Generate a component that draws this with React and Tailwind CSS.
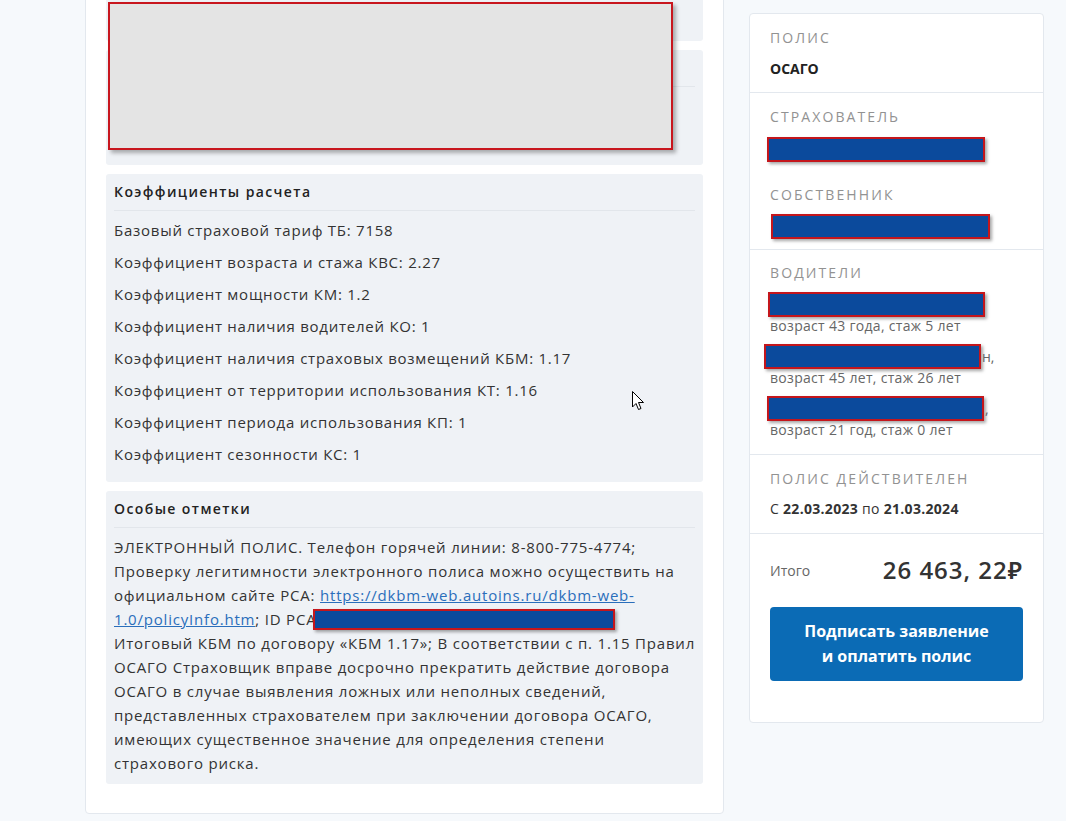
import React from 'react'

const font = { fontFamily: '"Open Sans", "Noto Sans", Arial, sans-serif' }

function Redact({ w, className = '' }) {
    return (
        <div
            className={`h-[25px] bg-[#0b4a9c] border-2 border-[#c4161c] shadow-[2px_2px_3px_rgba(0,0,0,0.35)] ${className}`}
            style={{ width: w }}
        />
    )
}

function Label({ children }) {
    return <div className="text-[14px] leading-5 tracking-[2.1px] uppercase text-[#929292]">{children}</div>
}

const coefs = [
    'Базовый страховой тариф ТБ: 7158',
    'Коэффициент возраста и стажа КВС: 2.27',
    'Коэффициент мощности КМ: 1.2',
    'Коэффициент наличия водителей КО: 1',
    'Коэффициент наличия страховых возмещений КБМ: 1.17',
    'Коэффициент от территории использования КТ: 1.16',
    'Коэффициент периода использования КП: 1',
    'Коэффициент сезонности КС: 1',
]

const drivers = [
    { w: 217, shift: 'ml-[-2px]', age: 'возраст 43 года, стаж 5 лет', tail: '' },
    { w: 217, shift: 'ml-[-6px]', age: 'возраст 45 лет, стаж 26 лет', tail: 'н,' },
    { w: 217, shift: 'ml-[-3px]', age: 'возраст 21 год, стаж 0 лет', tail: ',' },
]

export default function App() {
    return (
        <div className="relative min-h-[821px] h-[821px] overflow-hidden bg-[#f6f9fc] text-[#333]" style={font}>
            <div className="flex items-start gap-[25px] pl-[85px]">
                {/* left card */}
                <div className="relative w-[639px] mt-[-30px] bg-white border border-[#e3e8ee] rounded-[4px] px-5 pt-5 pb-[29px] flex flex-col gap-[9px]">
                    <div className="h-[50px] bg-[#eff2f6] rounded-[3px]" />
                    <div className="h-[115px] bg-[#eff2f6] rounded-[3px] px-2 pt-9">
                        <div className="border-t border-[#e2e6eb]" />
                    </div>

                    <div className="bg-[#eff2f6] rounded-[3px] pb-3">
                        <div className="px-2 pt-2 pb-2 text-[14px] leading-5 font-semibold tracking-[1.4px] text-[#222]">Коэффициенты расчета</div>
                        <div className="mx-2 border-t border-[#e2e6eb]" />
                        <div className="px-2 pt-[3px] text-[15px] leading-8 tracking-[0.75px] text-[#333]">
                            {coefs.map(c => (
                                <div key={c}>{c}</div>
                            ))}
                        </div>
                    </div>

                    <div className="bg-[#eff2f6] rounded-[3px] pb-[9px]">
                        <div className="px-2 pt-2 pb-2 text-[14px] leading-5 font-semibold tracking-[1.4px] text-[#222]">Особые отметки</div>
                        <div className="mx-2 border-t border-[#e2e6eb]" />
                        <div className="px-2 pt-[7px] text-[15px] leading-6 tracking-[0.8px] text-[#333] whitespace-nowrap">
                            <div>ЭЛЕКТРОННЫЙ ПОЛИС. Телефон горячей линии: 8-800-775-4774;</div>
                            <div>Проверку легитимности электронного полиса можно осуществить на</div>
                            <div>
                                официальном сайте РСА: <a href="#" className="text-[#2a6ebb] underline">https://dkbm-web.autoins.ru/dkbm-web-</a>
                            </div>
                            <div className="flex items-center">
                                <a href="#" className="text-[#2a6ebb] underline">1.0/policyInfo.htm</a>
                                <span>; ID РСА&nbsp;</span>
                                <div className="ml-[-8px] h-[21px] w-[302px] bg-[#0b4a9c] border-2 border-[#c4161c] shadow-[2px_2px_3px_rgba(0,0,0,0.35)]" />
                            </div>
                            <div>Итоговый КБМ по договору «КБМ 1.17»; В соответствии с п. 1.15 Правил</div>
                            <div>ОСАГО Страховщик вправе досрочно прекратить действие договора</div>
                            <div>ОСАГО в случае выявления ложных или неполных сведений,</div>
                            <div>представленных страхователем при заключении договора ОСАГО,</div>
                            <div>имеющих существенное значение для определения степени</div>
                            <div>страхового риска.</div>
                        </div>
                    </div>

                    {/* redaction over the top sections */}
                    <div className="absolute left-[22px] top-[31px] w-[565px] h-[148px] bg-[#e4e4e4] border-2 border-[#c8161e] shadow-[3px_3px_4px_rgba(0,0,0,0.3)]" />
                </div>

                {/* right card */}
                <div className="w-[295px] mt-[13px] bg-white border border-[#e3e8ee] rounded-[4px]">
                    <div className="px-5 pt-[14px] pb-[13px] border-b border-[#e3e8ee]">
                        <Label>Полис</Label>
                        <div className="mt-[11px] text-[14px] leading-5 font-bold text-[#222]">ОСАГО</div>
                    </div>

                    <div className="px-5 pt-[14px] pb-[13px] border-b border-[#e3e8ee]">
                        <Label>Страхователь</Label>
                        <div className="mt-3 h-5 flex items-center">
                            <Redact w={218} className="ml-[-3px]" />
                        </div>
                        <div className="mt-[26px]">
                            <Label>Собственник</Label>
                        </div>
                        <div className="mt-[11px] h-5 flex items-center">
                            <Redact w={219} className="ml-[1px]" />
                        </div>
                    </div>

                    <div className="px-5 pt-[13px] pb-[13px] border-b border-[#e3e8ee]">
                        <Label>Водители</Label>
                        <div className="mt-[10px] flex flex-col gap-2">
                            {drivers.map((d, i) => (
                                <div key={i}>
                                    <div className="h-[22px] flex items-center text-[14px] text-[#666]">
                                        <Redact w={d.w} className={d.shift} />
                                        {d.tail && <span className="ml-[1px]">{d.tail}</span>}
                                    </div>
                                    <div className="text-[14px] leading-[22px] tracking-[0.3px] text-[#666]">{d.age}</div>
                                </div>
                            ))}
                        </div>
                    </div>

                    <div className="px-5 pt-[14px] pb-[14px] border-b border-[#e3e8ee]">
                        <Label>Полис действителен</Label>
                        <div className="mt-[10px] text-[14px] leading-5 tracking-[0.3px] text-[#333]">
                            С <b className="font-bold">22.03.2023</b> по <b className="font-bold">21.03.2024</b>
                        </div>
                    </div>

                    <div className="px-5 pt-[21px] pb-[41px]">
                        <div className="flex items-center justify-between h-[30px]">
                            <span className="text-[14px] text-[#666]">Итого</span>
                            <span className="text-[24px] font-semibold text-[#333] tracking-[1px]">26 463, 22₽</span>
                        </div>
                        <button className="mt-[22px] w-full h-[74px] rounded-[4px] bg-[#0b6bb5] text-white text-[16px] leading-[25px] font-bold">
                            Подписать заявление
                            <br />
                            и оплатить полис
                        </button>
                    </div>
                </div>
            </div>

            {/* mouse cursor */}
            <svg className="absolute left-[632px] top-[391px]" width="13" height="20" viewBox="0 0 13 20">
                <path d="M0.5 0.5 L0.5 16 L4 12.5 L6.5 18.5 L9 17.5 L6.5 11.5 L11.5 11.5 Z" fill="white" stroke="black" strokeWidth="1" />
            </svg>
        </div>
    )
}
